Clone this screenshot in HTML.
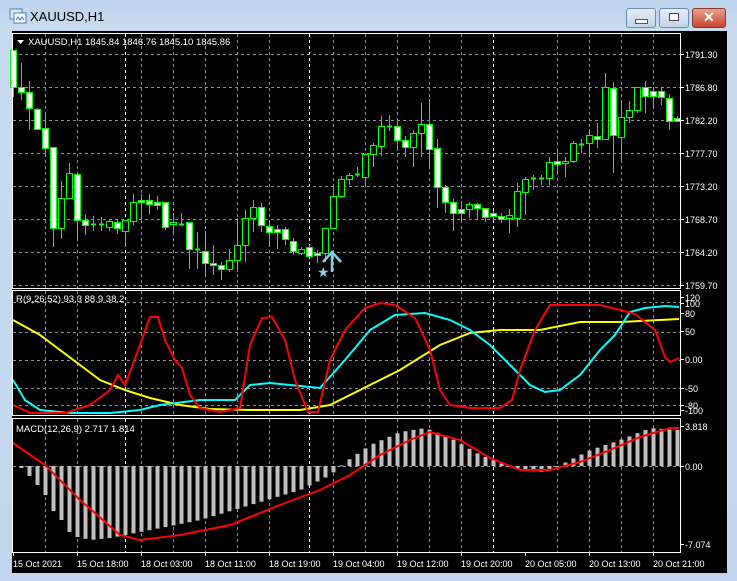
<!DOCTYPE html>
<html><head><meta charset="utf-8"><style>
body{margin:0;width:737px;height:581px;overflow:hidden;background:#c5d9ef;font-family:"Liberation Sans",sans-serif;}
#frame{position:absolute;left:0;top:0;width:737px;height:581px;background:linear-gradient(#bcd3ec,#c9dbef 30px,#c2d6ee);}
#title{position:absolute;left:30px;top:9px;font-size:13px;color:#000;}
.btn{position:absolute;top:8px;height:18px;border:1px solid #6d8bb0;border-radius:3px;background:linear-gradient(#e6eef8,#c2d3e8);}
#chart{position:absolute;left:12px;top:31px;width:715px;height:542px;background:#000;}
svg text{font-family:"Liberation Sans",sans-serif;font-size:9.5px;fill:#fff;}
svg text.ax{font-size:9px;}
</style></head><body>
<div id="frame"></div>
<svg style="position:absolute;left:9px;top:8px" width="18" height="16"><rect x="1" y="1" width="12" height="10" fill="#dfe9f5" stroke="#4a7fc0"/><rect x="5" y="5" width="12" height="10" fill="#fff" stroke="#4a7fc0"/><path d="M7 12 l2-3 2 3 2-3 2 3" stroke="#3a6fb0" fill="none"/></svg>
<div id="title">XAUUSD,H1</div>
<div class="btn" style="left:626px;width:28px"><div style="position:absolute;left:8px;top:10px;width:11px;height:3px;background:#fff;border:1px solid #556"></div></div>
<div class="btn" style="left:659px;width:28px"><div style="position:absolute;left:9px;top:4px;width:8px;height:6px;background:#fff;border:1px solid #445"></div></div>
<div class="btn" style="left:692px;width:32px;border-color:#8a3a2a;background:linear-gradient(#e8a090,#c8462f)"><div style="position:absolute;left:10px;top:0px;color:#fff;font-weight:bold;font-size:14px">✕</div></div>
<div id="chart"></div>
<svg id="s" style="position:absolute;left:0;top:0" width="737" height="581">
<g id="grid" stroke="#8a8f99" stroke-dasharray="3,3" stroke-width="1"></g>
<g id="cand"></g>
<g id="ind" fill="none" stroke-width="2"></g>
<g fill="none" stroke="#fff" stroke-width="1">
<rect x="12.5" y="33.5" width="668" height="255"/>
<rect x="12.5" y="290.5" width="668" height="125"/>
<rect x="12.5" y="418.5" width="668" height="134"/>
</g>
<path d="M17 40 h7 l-3.5 4z" fill="#fff"/>
<text x="28" y="45">XAUUSD,H1  1845.84 1846.76 1845.10 1845.86</text>
<text x="16" y="302">R(9,26,52) 93.3 88.9 38.2</text>
<text x="16" y="432">MACD(12,26,9) 2.717 1.814</text>
<g id="axis"></g>
<g fill="none" stroke="#87ceeb" stroke-width="2.5"><path d="M332 272 V253 M323 262 L332 252 L341 262"/></g>
<text x="317" y="277" style="fill:#87ceeb;font-size:14px">★</text>
</svg>
<script>
var S='http://www.w3.org/2000/svg';
function el(p,n,a){var e=document.createElementNS(S,n);for(var k in a)e.setAttribute(k,a[k]);p.appendChild(e);return e;}
var g=document.getElementById('grid');
var xs=[45,77,141,173,205,237,269,333,365,397,429,461,557,589,621,653];
[[34,288],[291,415],[419,552]].forEach(function(r){xs.forEach(function(x){el(g,'line',{x1:x+.5,x2:x+.5,y1:r[0],y2:r[1]});});
[125,309,493].forEach(function(x){el(g,'line',{x1:x+.5,x2:x+.5,y1:r[0],y2:r[1],stroke:'#fff'});});});
[54,87,120,153,186,219,252,285,302,332,360,388,405,466].forEach(function(y){el(g,'line',{x1:13,x2:680,y1:y+.5,y2:y+.5});});
var C=[[50,87,50,97,1],[87,92,63,100,1],[92,108,81,130,1],[109,129,108,130,1],[128,148,112,155,1],[147,228,147,247,1],[198,228,181,239,0],[173,198,163,198,0],[174,220,174,240,1],[220,225,214,235,1],[224,225,216,231,2],[224,225,217,231,2],[221,227,219,231,0],[222,228,220,234,1],[220,231,220,247,0],[202,221,194,225,0],[200,202,194,220,1],[200,204,194,214,1],[202,205,196,210,1],[202,227,202,230,1],[222,224,213,235,0],[224,225,213,226,2],[222,249,222,269,1],[249,251,232,269,2],[251,263,231,275,1],[263,265,245,275,1],[265,269,262,280,1],[260,269,249,272,0],[245,260,218,272,0],[218,245,210,262,0],[207,218,200,232,0],[207,225,203,232,1],[226,232,220,245,1],[229,232,225,249,1],[229,239,227,245,1],[241,251,238,255,1],[249,253,247,255,0],[247,256,245,257,1],[253,255,250,263,1],[228,253,228,262,0],[196,228,187,228,0],[179,196,176,198,0],[175,179,173,185,0],[174,176,167,177,2],[154,177,153,185,0],[145,154,143,167,0],[126,146,116,156,0],[126,127,115,131,2],[126,140,119,149,1],[140,147,136,157,1],[133,147,130,167,0],[124,133,103,157,0],[124,149,99,167,1],[148,187,139,208,1],[187,202,185,213,1],[202,213,199,231,1],[209,213,201,223,1],[204,209,202,218,0],[204,208,203,220,1],[208,217,208,222,1],[213,216,211,219,1],[216,219,213,223,1],[215,218,209,233,0],[191,218,183,227,0],[179,192,177,215,0],[178,179,175,190,2],[178,179,175,185,2],[162,178,157,185,0],[161,164,151,174,1],[161,163,157,177,0],[143,161,141,163,0],[144,145,139,153,2],[135,143,129,153,0],[136,139,123,148,1],[87,139,73,140,0],[88,135,82,173,1],[117,137,100,161,0],[110,117,101,123,0],[87,110,87,113,0],[87,96,81,113,1],[91,96,87,107,1],[91,97,88,105,1],[98,121,94,130,1],[118,121,116,122,1]];
var cg=document.getElementById('cand');
C.forEach(function(c,k){var x=Math.round(13.3+8*k);if(x>679)return;
el(cg,'line',{x1:x+.5,x2:x+.5,y1:c[2],y2:c[3],stroke:'#00ff00'});
if(c[4]==2){el(cg,'line',{x1:x-2,x2:x+3,y1:c[0]+.5,y2:c[0]+.5,stroke:'#00ff00',"stroke-width":2});}
else el(cg,'rect',{x:x-2.5,y:c[0]+.5,width:6,height:Math.max(2,c[1]-c[0]),fill:c[4]?'#fff':'#000',stroke:'#00ff00'});});
function interp(P,x){for(var i=1;i<P.length;i++)if(x<=P[i][0]){var a=P[i-1],b=P[i];return a[1]+(b[1]-a[1])*(x-a[0])/(b[0]-a[0]);}return P[P.length-1][1];}
var H=[[13,466],[21,468],[29,476],[37,485],[45,495],[53,511],[61,520],[69,532],[77,537],[90,540],[110,538],[150,530],[200,520],[250,505],[300,490],[330,475],[345,462],[370,445],[400,432],[425,428],[450,438],[480,455],[505,465],[520,470],[540,472],[560,465],[590,450],[620,440],[650,428],[677,430]];
for(var k=1;k<84;k++){var x=Math.round(13.3+8*k);if(x>678)break;var y=interp(H,x);el(cg,'rect',{x:x-1.5,y:Math.min(y,466),width:4,height:Math.max(1,Math.abs(y-466)),fill:'#c0c0c0'});}
var ig=document.getElementById('ind');
function pl(pts,col){el(ig,'polyline',{points:pts.map(function(p){return p.join(',')}).join(' '),stroke:col});}
pl([[13,320],[40,335],[60,350],[100,380],[125,390],[150,398],[180,405],[210,409],[250,410],[300,410],[330,405],[360,390],[400,370],[440,345],[470,333],[500,330],[540,330],[580,322],[620,322],[660,320],[679,319]],'#ffff00');
pl([[13,380],[25,400],[40,410],[70,413],[110,413],[140,410],[160,405],[200,400],[235,400],[250,385],[270,383],[290,385],[320,388],[345,360],[370,330],[395,315],[425,313],[450,320],[470,330],[490,345],[510,365],[530,385],[545,392],[560,390],[580,375],[600,350],[615,335],[630,312],[645,308],[665,306],[679,307]],'#00ffff');
pl([[13,405],[30,413],[65,413],[90,405],[110,390],[118,375],[125,385],[140,345],[150,317],[158,317],[165,340],[175,360],[182,368],[190,395],[200,408],[220,412],[240,408],[250,345],[262,318],[272,317],[285,340],[295,380],[308,412],[318,412],[330,360],[345,330],[365,308],[380,303],[395,305],[415,318],[430,350],[440,390],[450,405],[470,408],[500,408],[512,400],[520,370],[535,330],[550,305],[570,305],[600,305],[620,310],[635,314],[645,322],[655,330],[665,357],[670,362],[679,358]],'#ff0000');
pl([[13,443],[45,465],[80,500],[120,535],[140,540],[180,535],[230,525],[280,505],[320,490],[350,475],[380,455],[410,440],[430,432],[460,440],[490,458],[520,470],[550,470],[580,462],[610,450],[640,437],[670,428],[679,428]],'#ff0000');
var ax=document.getElementById('axis');
function lab(y,t){el(ax,'line',{x1:680,x2:684,y1:y+.5,y2:y+.5,stroke:'#fff'});var e=el(ax,'text',{x:685,y:y+4,'class':'ax'});e.textContent=t;}
[[54,'1791.30'],[87,'1786.80'],[120,'1782.20'],[153,'1777.70'],[186,'1773.20'],[219,'1768.70'],[252,'1764.20'],[285,'1759.70'],[297,'120'],[303,'100'],[313,'80'],[331,'50'],[359,'0.00'],[388,'-50'],[405,'-80'],[410,'-100'],[426,'3.818'],[466,'0.00'],[544,'-7.074']].forEach(function(a){lab(a[0],a[1]);});
var T=['15 Oct 2021','15 Oct 18:00','18 Oct 03:00','18 Oct 11:00','18 Oct 19:00','19 Oct 04:00','19 Oct 12:00','19 Oct 20:00','20 Oct 05:00','20 Oct 13:00','20 Oct 21:00'];
T.forEach(function(t,i){var x=i==0?13:77+64*(i-1);el(ax,'line',{x1:x+.5,x2:x+.5,y1:552,y2:556,stroke:'#fff'});var e=el(ax,'text',{x:x,y:567,'class':'ax'});e.textContent=t;});
</script>
</body></html>
